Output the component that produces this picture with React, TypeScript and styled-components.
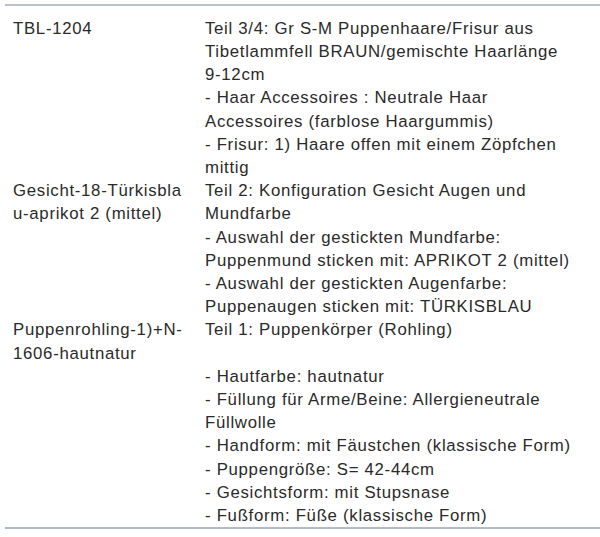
import React from "react";
import styled, { createGlobalStyle } from "styled-components";

const GlobalStyle = createGlobalStyle`
  html, body { margin: 0; padding: 0; background: #ffffff; }
  body { font-family: "Liberation Sans", Arial, sans-serif; }
`;

const Table = styled.div`
  margin: 4px 0 0 5px;
  padding: 10.8px 0 0 8px;
  border-top: 2px solid #b9c2cb;
  border-bottom: 2px solid #b3bcc5;
  display: flex;
  flex-direction: column;
  color: #2a2a2a;
  font-size: 16.8px;
  letter-spacing: 0.7px;
  line-height: 23.2px;
`;

const Row = styled.div`
  display: grid;
  grid-template-columns: 192px 1fr;
`;

const Cell = styled.div`
  display: flex;
  flex-direction: column;
`;

const Line = styled.span`
  display: block;
  white-space: nowrap;
  min-height: 23.2px;
`;

type RowData = { code: string[]; desc: string[] };

const rows: RowData[] = [
  {
    code: ["TBL-1204"],
    desc: [
      "Teil 3/4: Gr S-M Puppenhaare/Frisur aus",
      "Tibetlammfell BRAUN/gemischte Haarlänge",
      "9-12cm",
      "- Haar Accessoires : Neutrale Haar",
      "Accessoires (farblose Haargummis)",
      "- Frisur: 1) Haare offen mit einem Zöpfchen",
      "mittig",
    ],
  },
  {
    code: ["Gesicht-18-Türkisbla", "u-aprikot 2 (mittel)"],
    desc: [
      "Teil 2: Konfiguration Gesicht Augen und",
      "Mundfarbe",
      "- Auswahl der gestickten Mundfarbe:",
      "Puppenmund sticken mit: APRIKOT 2 (mittel)",
      "- Auswahl der gestickten Augenfarbe:",
      "Puppenaugen sticken mit: TÜRKISBLAU",
    ],
  },
  {
    code: ["Puppenrohling-1)+N-", "1606-hautnatur"],
    desc: [
      "Teil 1: Puppenkörper (Rohling)",
      "",
      "- Hautfarbe: hautnatur",
      "- Füllung für Arme/Beine: Allergieneutrale",
      "Füllwolle",
      "- Handform: mit Fäustchen (klassische Form)",
      "- Puppengröße: S= 42-44cm",
      "- Gesichtsform: mit Stupsnase",
      "- Fußform: Füße (klassische Form)",
    ],
  },
];

export default function App() {
  return (
    <>
      <GlobalStyle />
      <Table>
        {rows.map((r, i) => (
          <Row key={i}>
            <Cell>
              {r.code.map((l, j) => (
                <Line key={j}>{l}</Line>
              ))}
            </Cell>
            <Cell>
              {r.desc.map((l, j) => (
                <Line key={j}>{l}</Line>
              ))}
            </Cell>
          </Row>
        ))}
      </Table>
    </>
  );
}
